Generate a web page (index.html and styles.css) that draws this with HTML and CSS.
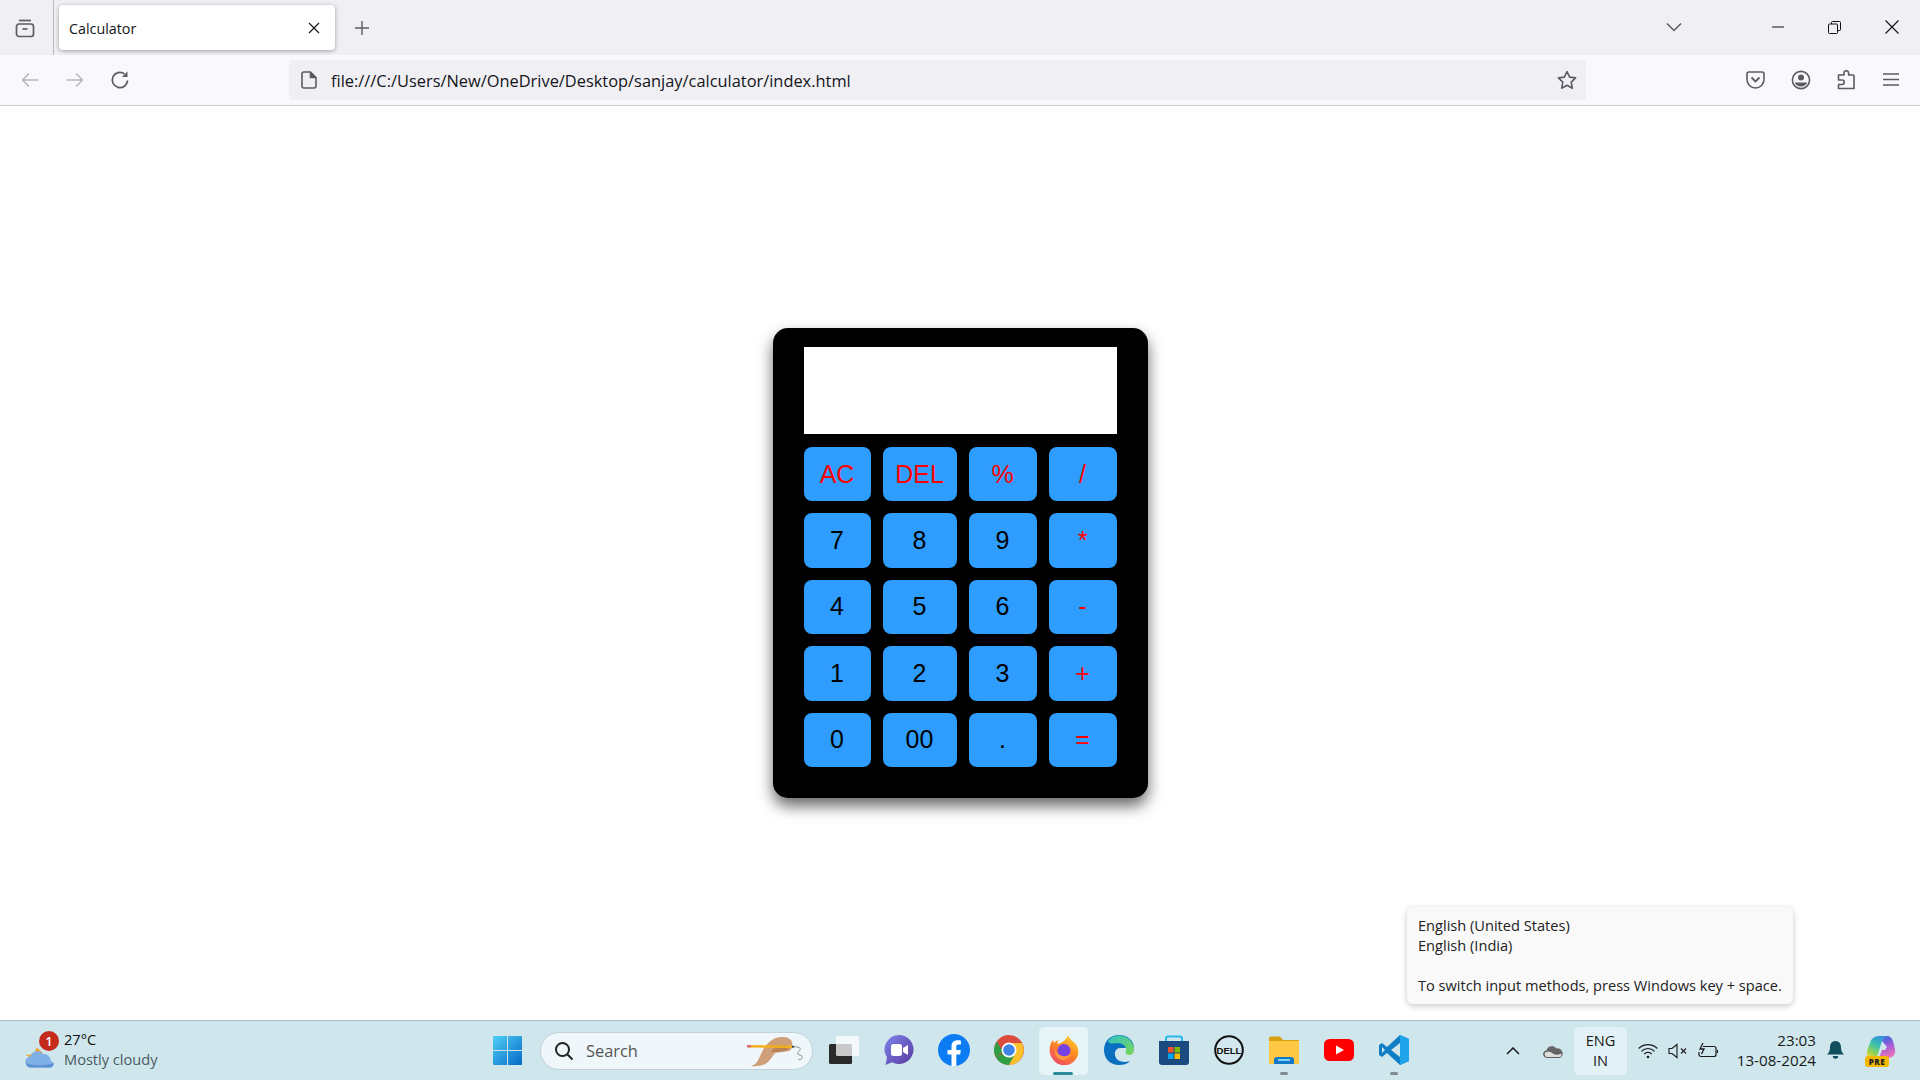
FILE: index.html
```html
<!DOCTYPE html>
<html lang="en">
<head>
<meta charset="utf-8">
<title>Calculator</title>
<link rel="stylesheet" href="styles.css">
</head>
<body>
<div class="tabstrip">
  <div class="tool-cell tabs-btn">
    <svg width="22" height="22" viewBox="0 0 22 22" fill="none" stroke="#5b5b66" stroke-width="1.7"><path d="M5 3.500h12"/><rect x="2.500" y="7" width="17" height="12.500" rx="2.500"/><path d="M8.500 12h5"/></svg>
  </div>
  <div class="tab-divider"></div>
  <div class="tab">
    <span class="tab-title">Calculator</span>
    <svg width="12" height="12" viewBox="0 0 12 12" fill="none" stroke="#15141a" stroke-width="1.2"><path d="M1 1l10 10M11 1L1 11"/></svg>
  </div>
  <div class="new-tab">
    <svg width="16" height="16" viewBox="0 0 16 16" fill="none" stroke="#5b5b66" stroke-width="1.4"><path d="M8 1v14M1 8h14"/></svg>
  </div>
  <div class="strip-right">
    <svg class="list-all" width="16" height="10" viewBox="0 0 16 10" fill="none" stroke="#5b5b66" stroke-width="1.5"><path d="M1 1.500l7 7 7-7"/></svg>
    <div class="win-btn"><svg width="12" height="2" viewBox="0 0 12 2"><path d="M0 1h12" stroke="#111" stroke-width="1"/></svg></div>
    <div class="win-btn"><svg width="13" height="13" viewBox="0 0 13 13" fill="none" stroke="#111" stroke-width="1"><rect x=".5" y="3" width="9" height="9.500" rx="1"/><path d="M3.500 3V1.500a1 1 0 0 1 1-1h7a1 1 0 0 1 1 1v7a1 1 0 0 1-1 1H9.500"/></svg></div>
    <div class="win-btn"><svg width="14" height="14" viewBox="0 0 14 14" fill="none" stroke="#111" stroke-width="1.1"><path d="M.5.5l13 13M13.500.5l-13 13"/></svg></div>
  </div>
</div>

<div class="toolbar">
  <div class="nav-btn"><svg width="18" height="16" viewBox="0 0 18 16" fill="none" stroke="#b6b6bb" stroke-width="1.5"><path d="M17.500 8H1.500M8 1.500L1.500 8 8 14.500"/></svg></div>
  <div class="nav-btn"><svg width="18" height="16" viewBox="0 0 18 16" fill="none" stroke="#b6b6bb" stroke-width="1.5"><path d="M.5 8h16M10 1.500L16.500 8 10 14.500"/></svg></div>
  <div class="nav-btn"><svg width="20" height="20" viewBox="0 0 20 20" fill="none" stroke="#5b5b66" stroke-width="1.7"><path d="M17.500 10.500A7.600 7.600 0 1 1 14.500 4"/><path d="M17.500 1.500v5.500h-5.500" fill="#5b5b66" stroke="none"/></svg></div>
  <div class="urlbar">
    <svg class="page-icon" width="16" height="18" viewBox="0 0 16 18" fill="none" stroke="#5b5b66" stroke-width="1.6"><path d="M3 1h6.500L15 6.500V15a2 2 0 0 1-2 2H3a2 2 0 0 1-2-2V3a2 2 0 0 1 2-2z"/><path d="M9.500 1v5.500H15" fill="#5b5b66"/></svg>
    <span class="url">file:///C:/Users/New/OneDrive/Desktop/sanjay/calculator/index.html</span>
    <svg class="star" width="20" height="20" viewBox="0 0 20 20" fill="none" stroke="#5b5b66" stroke-width="1.6" stroke-linejoin="round"><path d="M10 1.500l2.600 5.600 6 .8-4.400 4.200 1.100 6.100L10 15.200l-5.300 3 1.100-6.100L1.400 7.900l6-.8z"/></svg>
  </div>
  <div class="tools">
    <div class="nav-btn"><svg width="19" height="18" viewBox="0 0 19 18" fill="none" stroke="#5b5b66" stroke-width="1.6"><path d="M3 1h13a2 2 0 0 1 2 2v5.500a8.500 8.500 0 0 1-17 0V3a2 2 0 0 1 2-2z"/><path d="M5.500 6.500l4 4 4-4" stroke-width="1.8"/></svg></div>
    <div class="nav-btn"><svg width="20" height="20" viewBox="0 0 20 20"><circle cx="10" cy="10" r="8.600" fill="none" stroke="#5b5b66" stroke-width="1.6"/><circle cx="10" cy="7.500" r="3" fill="#5b5b66"/><path d="M3.800 12.500h12.400a6.800 6.800 0 0 1-12.400 0z" fill="#5b5b66"/></svg></div>
    <div class="nav-btn"><svg width="18" height="20" viewBox="0 0 18 20" fill="none" stroke="#5b5b66" stroke-width="1.6" stroke-linejoin="round"><path d="M7 5V3a2.300 2.300 0 0 1 4.600 0v2H16a1 1 0 0 1 1 1v12.500H1.500v-4H5a2.200 2.200 0 0 0 0-4.500H1.500V5z"/></svg></div>
    <div class="nav-btn"><svg width="16" height="13" viewBox="0 0 16 13" stroke="#5b5b66" stroke-width="1.5"><path d="M0 1h16M0 6.500h16M0 12h16"/></svg></div>
  </div>
</div>

<main class="page">
  <div class="calculator">
    <div class="display"></div>
    <div class="keys">
      <button class="key op">AC</button><button class="key op">DEL</button><button class="key op">%</button><button class="key op">/</button>
      <button class="key">7</button><button class="key">8</button><button class="key">9</button><button class="key op">*</button>
      <button class="key">4</button><button class="key">5</button><button class="key">6</button><button class="key op">-</button>
      <button class="key">1</button><button class="key">2</button><button class="key">3</button><button class="key op">+</button>
      <button class="key">0</button><button class="key">00</button><button class="key">.</button><button class="key op">=</button>
    </div>
  </div>
</main>

<div class="tooltip">
  <div>English (United States)</div>
  <div>English (India)</div>
  <div class="tip-hint">To switch input methods, press Windows key + space.</div>
</div>

<footer class="taskbar">
  <div class="weather">
    <div class="weather-icon">
      <svg width="30" height="26" viewBox="0 0 30 26"><path d="M0 11.500c6 1.500 10-1 11.500-7l6 5-7 8z" fill="#f0a028"/><path d="M6 24.500a5.500 5.500 0 0 1-.5-11 7 7 0 0 1 12.500-2.500 6.500 6.500 0 0 1 7.500 6.500 3.700 3.700 0 0 1 .5 7z" fill="#7fb0e6"/><path d="M1 20c6 3 20 3 28 0-.5 3-2 4.500-4 4.500H6C3 24.500 1.500 23 1 20z" fill="#5d8fd6"/></svg>
      <span class="badge">1</span>
    </div>
    <div class="weather-text"><div class="temp">27°C</div><div class="sky">Mostly cloudy</div></div>
  </div>

  <div class="cell">
    <svg width="29" height="29" viewBox="0 0 29 29"><defs><linearGradient id="w" x1="0" y1="0" x2="1" y2="1"><stop offset="0" stop-color="#4fd0f7"/><stop offset="1" stop-color="#0669c6"/></linearGradient></defs><path d="M1 0h13v14H0V1a1 1 0 0 1 1-1zM15 0h13a1 1 0 0 1 1 1v13H15zM0 15h14v14H1a1 1 0 0 1-1-1zM15 15h14v13a1 1 0 0 1-1 1H15z" fill="url(#w)"/></svg>
  </div>

  <div class="search">
    <svg width="20" height="20" viewBox="0 0 20 20" fill="none" stroke="#222" stroke-width="2"><circle cx="8.500" cy="8.500" r="6.500"/><path d="M13.500 13.500l5 5"/></svg>
    <span class="search-text">Search</span>
    <svg class="pencil" width="58" height="32" viewBox="0 0 58 32"><path d="M4 31c6-1 8-8 11-14 3-7 10-15 20-15 6 0 9 2 10 5s0 8-3 9l-8 1-6 1-6 8c-3 4-11 6-18 5z" fill="#cf9f7a"/><path d="M24 17l4-6 10-1 4 3-3 3-8 1z" fill="#b98358"/><path d="M2 10l43 .5v2.500L2 12.500z" fill="#f2b01e"/><path d="M0 10h4v2.500H0z" fill="#e06a6a"/><path d="M45 10.500l4 1.200-4 1.300z" fill="#444"/><path d="M49 12c3 0 5 1 4 3s-3 2-2 4 4 0 4 3-2 3-4 2" fill="none" stroke="#777" stroke-width=".8"/></svg>
  </div>

  <div class="cell first-app">
    <svg width="30" height="28" viewBox="0 0 30 28"><rect x="0" y="8" width="23" height="20" rx="1.500" fill="#2a2a2a"/><rect x="7" y="0" width="23" height="20" rx="1.500" fill="#fff" fill-opacity=".75"/></svg>
  </div>
  <div class="cell">
    <svg width="30" height="30" viewBox="0 0 30 30"><defs><linearGradient id="t" x1="0" y1="0" x2="1" y2="1"><stop offset="0" stop-color="#7b83eb"/><stop offset="1" stop-color="#5b3a9e"/></linearGradient></defs><path d="M15 0a14.500 14.500 0 1 1-7 27.200L1.500 30l1.500-7.500A14.500 14.500 0 0 1 15 0z" fill="url(#t)"/><rect x="7" y="9" width="11" height="12" rx="2.500" fill="#fff"/><path d="M19 13l5-3v10l-5-3z" fill="#fff"/></svg>
  </div>
  <div class="cell">
    <svg width="32" height="32" viewBox="0 0 32 32"><circle cx="16" cy="16" r="16" fill="#0b7cf3"/><path d="M13.500 32V20.500H9.500V16h4v-3.500c0-4 2.400-6.200 6-6.200 1.700 0 3 .2 3.400.2v4h-2.300c-1.900 0-2.300.9-2.300 2.200V16h4.500l-.6 4.500h-3.900V32z" fill="#fff"/></svg>
  </div>
  <div class="cell">
    <svg width="30" height="30" viewBox="0 0 30 30"><circle cx="15" cy="15" r="15" fill="#dd4b3e"/><path d="M15 15L2 22.500A15 15 0 0 0 15 30l7.500-13z" fill="#2f9e44"/><path d="M15 8h13a15 15 0 0 1-13 22l7-13z" fill="#fbc02d"/><path d="M2 22.500A15 15 0 0 1 3 6.500L9 17z" fill="#2f9e44"/><circle cx="15" cy="15" r="7.500" fill="#fff"/><circle cx="15" cy="15" r="5.800" fill="#3f83e8"/></svg>
  </div>
  <div class="cell active">
    <svg width="30" height="30" viewBox="0 0 30 30"><defs><linearGradient id="f" x1=".8" y1="0" x2=".2" y2="1"><stop offset="0" stop-color="#ffd43b"/><stop offset=".45" stop-color="#ff8a1f"/><stop offset="1" stop-color="#f0456a"/></linearGradient></defs><path d="M19 0c1 4 5 6 8 9 3 5 3 11 0 15a14 14 0 0 1-24-1C0 18 0 13 2 8l2-3 1 3c2-2 4-3 5-3-2 2-2 3-1 4 3-1 8-3 10-9z" fill="url(#f)"/><circle cx="15" cy="15.500" r="6.500" fill="#7542e5"/><path d="M6 13c1 7 9 11 16 6-3 8-14 8-16-1z" fill="#ff9a3c"/></svg>
    <span class="active-mark"></span>
  </div>
  <div class="cell">
    <svg width="30" height="30" viewBox="0 0 30 30"><defs><linearGradient id="e" x1="0" y1="0" x2="1" y2="1"><stop offset="0" stop-color="#2fc4c8"/><stop offset="1" stop-color="#7bd652"/></linearGradient></defs><path d="M15 0C6 0 0 6.500 0 15s6 15 15 15c5 0 9-1.500 11-4-6 2-14 1-15-6-.7-4 2-7 5-7h14C30 6 24 0 15 0z" fill="#0b6fc0"/><path d="M4 6c4-6 14-8 21-2 3 3 5 6 5 10 0 4-2 6-5 6-3 0-4-2-3-4 1-4-3-8-8-8-4 0-8 2-10-2z" fill="url(#e)"/></svg>
  </div>
  <div class="cell">
    <svg width="30" height="30" viewBox="0 0 30 30"><path d="M7 7V3.500A2 2 0 0 1 9 1.500h12a2 2 0 0 1 2 2V7" fill="none" stroke="#2bb6ee" stroke-width="2"/><path d="M0 6h30v21a3 3 0 0 1-3 3H3a3 3 0 0 1-3-3z" fill="#1a4a80"/><rect x="9" y="12" width="5.500" height="5.500" fill="#f0502a"/><rect x="15.500" y="12" width="5.500" height="5.500" fill="#7fba00"/><rect x="9" y="18.500" width="5.500" height="5.500" fill="#00a4ef"/><rect x="15.500" y="18.500" width="5.500" height="5.500" fill="#ffb900"/></svg>
  </div>
  <div class="cell">
    <svg width="30" height="30" viewBox="0 0 30 30"><circle cx="15" cy="15" r="13.800" fill="#fff" fill-opacity=".1" stroke="#111" stroke-width="2"/><text class="dell" x="15" y="18.500" text-anchor="middle">DELL</text></svg>
  </div>
  <div class="cell">
    <svg width="30" height="28" viewBox="0 0 30 28"><path d="M0 2a1.500 1.500 0 0 1 1.500-1.500H11L14 4h16v6H0z" fill="#d9a00f"/><path d="M0 5h30v22a1 1 0 0 1-1 1H1a1 1 0 0 1-1-1z" fill="#fdc944"/><path d="M5 28v-4a3 3 0 0 1 3-3h14a3 3 0 0 1 3 3v4z" fill="#0f78c4"/><rect x="9" y="23" width="12" height="2" fill="#7fd0f5"/></svg>
    <span class="run-mark"></span>
  </div>
  <div class="cell">
    <svg width="30" height="22" viewBox="0 0 30 22"><rect width="30" height="22" rx="5.500" fill="#f00"/><path d="M12 6.500l8 4.500-8 4.500z" fill="#fff"/></svg>
  </div>
  <div class="cell">
    <svg width="30" height="30" viewBox="0 0 30 30"><path d="M21 0l9 4v22l-9 4L8 18l-5 4-3-2v-10l3-2 5 4z" fill="#0f7ec4"/><path d="M21 0l9 4v22l-9 4z" fill="#1fa4ec"/><path d="M21 8v14l-9-7z" fill="#cfe6ed"/><path d="M3 12l3 3-3 3z" fill="#cfe6ed"/></svg>
    <span class="run-mark"></span>
  </div>

  <div class="tray">
    <div class="tray-cell chevron"><svg width="14" height="8" viewBox="0 0 14 8" fill="none" stroke="#1a1a1a" stroke-width="1.500"><path d="M1 7l6-6 6 6"/></svg></div>
    <div class="tray-cell cloud"><svg width="20" height="14" viewBox="0 0 20 14"><path d="M4 13.500a3.500 3.500 0 0 1-.5-7A5.500 5.500 0 0 1 13.500 4.500a4.500 4.500 0 0 1 2.500 9z" fill="#666"/><path d="M1 9c4-3 6-2 9 0s6 1 9 0c.5 3-1 4.500-3 4.500H4C2 13.500 1 11.500 1 9z" fill="#ddd" stroke="#444" stroke-width=".8"/></svg></div>
    <div class="lang"><div>ENG</div><div>IN</div></div>
    <div class="tray-cell status"><svg width="20" height="16" viewBox="0 0 20 16" fill="none" stroke="#1a1a1a" stroke-width="1.200"><path d="M.7 5.500a13 13 0 0 1 18.600 0M3.500 8.300a9 9 0 0 1 13 0M6.300 11a5 5 0 0 1 7.400 0"/><circle cx="10" cy="14" r="1.300" fill="#1a1a1a" stroke="none"/></svg></div>
    <div class="tray-cell status"><svg width="20" height="16" viewBox="0 0 20 16" fill="none" stroke="#1a1a1a" stroke-width="1.100"><path d="M1 5.500h3L9 1.500v13L4 10.500H1z"/><path d="M13 5.500l5 5M18 5.500l-5 5"/></svg></div>
    <div class="tray-cell status"><svg width="20" height="16" viewBox="0 0 20 16" fill="none" stroke="#1a1a1a" stroke-width="1.200"><path d="M5 3.500h11a2 2 0 0 1 2 2v6a2 2 0 0 1-2 2H3a2 2 0 0 1-2-2V9"/><path d="M19.500 7v3"/><path d="M5 0L2 6h4l-2.500 5" stroke-width="1.300"/></svg></div>
    <div class="clock"><div>23:03</div><div>13-08-2024</div></div>
    <div class="tray-cell bell"><svg width="17" height="19" viewBox="0 0 17 19"><path d="M8.500 0C4.500 0 3 3 3 6.500c0 3-1 5-3 7h17c-2-2-3-4-3-7C14 3 12.500 0 8.500 0z" fill="#10505f"/><path d="M5.800 15h5.400a2.700 2.700 0 0 1-5.400 0z" fill="#10505f"/></svg></div>
    <div class="copilot">
      <svg width="30" height="24" viewBox="0 0 30 24"><defs><linearGradient id="c1" x1=".7" y1="0" x2=".2" y2="1"><stop offset="0" stop-color="#2f8fe0"/><stop offset=".45" stop-color="#3fc4a8"/><stop offset=".8" stop-color="#9fd44a"/><stop offset="1" stop-color="#f4d03f"/></linearGradient><linearGradient id="c2" x1=".4" y1="0" x2=".7" y2="1"><stop offset="0" stop-color="#2a6fdb"/><stop offset=".5" stop-color="#a85bd8"/><stop offset="1" stop-color="#f27ab0"/></linearGradient></defs><path d="M13 1h8c-3 0-4 2-5 5l-4 13c-1 3-3 4-6 4-4 0-6-3-5-7L4 8c1-4 4-7 9-7z" fill="url(#c1)"/><path d="M16 6c1-3 2-5 5-5 3 0 5 2 6 5l2 8c1 5-2 9-7 9H9c3 0 5-2 6-5l1-3h3l2-3z" fill="url(#c2)"/></svg>
      <span class="pre">PRE</span>
    </div>
  </div>
</footer>
</body>
</html>
```

FILE: styles.css
```css
* { box-sizing: border-box; }

html, body { height: 100%; margin: 0; }

body {
  display: flex;
  flex-direction: column;
  height: 1080px;
  overflow: hidden;
  background: #fff;
  font-family: "Open Sans", "Noto Sans", sans-serif;
  color: #1a1a1a;
  position: relative;
}

/* Browser chrome */
.tabstrip {
  display: flex;
  align-items: center;
  flex: 0 0 55px;
  background: #f0f0f4;
}

.tool-cell, .nav-btn, .new-tab, .win-btn {
  display: flex;
  align-items: center;
  justify-content: center;
}

.tabs-btn { width: 50px; height: 55px; }

.tab-divider {
  width: 1px;
  height: 55px;
  margin: 0 5px 0 3px;
  background: #b8b8bd;
}

.tab {
  display: flex;
  align-items: center;
  justify-content: space-between;
  width: 276px;
  height: 45px;
  padding: 0 15px 0 10px;
  background: #fff;
  border-radius: 4px;
  box-shadow: 0 1px 4px rgba(0, 0, 0, .35);
}

.tab-title {
  padding-top: 1px;
  font-size: 14.3px;
  color: #15141a;
}

.new-tab { width: 53px; height: 44px; }

.strip-right {
  display: flex;
  align-items: center;
  margin-left: auto;
  height: 55px;
}

.list-all { margin-right: 67px; margin-top: -1px; }

.win-btn { width: 57px; height: 55px; margin-top: -1px; }

.toolbar {
  display: flex;
  align-items: center;
  flex: 0 0 51px;
  padding: 0 7px 1px 7px;
  background: #f9f9fb;
  border-bottom: 1px solid #cfcfd8;
}

.nav-btn { width: 45px; height: 40px; flex: none; }

.urlbar {
  display: flex;
  align-items: center;
  flex: none;
  width: 1297px;
  height: 40px;
  margin-left: 147px;
  padding: 0 9px 0 12px;
  background: #f0f0f4;
  border-radius: 4px;
}

.page-icon { flex: none; }

.url {
  margin-left: 14px;
  padding-top: 2px;
  font-size: 16.4px;
  color: #15141a;
  white-space: nowrap;
}

.star { margin-left: auto; }

.tools {
  display: flex;
  margin-left: auto;
}

/* Calculator page */
.page {
  display: flex;
  flex: 1;
  align-items: center;
  justify-content: center;
  min-height: 0;
}

.calculator {
  width: 375px;
  height: 470px;
  padding: 19px 31px 0;
  background: #000;
  border-radius: 15px;
  box-shadow: 0 8px 15px rgba(0, 0, 0, .6);
}

.display { height: 87px; background: #fff; }

.keys {
  display: grid;
  grid-template-columns: 67px 74px 68px 68px;
  grid-auto-rows: 54.4px;
  gap: 12px;
  margin-top: 13px;
}

.key {
  padding: 0;
  border: 0;
  border-radius: 8px;
  background: #2e9dff;
  font-family: "Liberation Sans", Arial, sans-serif;
  font-size: 25px;
  color: #000;
}

.key.op { color: #f00; }

/* Tooltip */
.tooltip {
  position: absolute;
  left: 1407px;
  top: 907px;
  width: 386px;
  height: 97px;
  padding: 8px 11px;
  background: #f9f9f9;
  border-radius: 6px;
  box-shadow: 0 2px 6px rgba(0, 0, 0, .22);
  font-size: 14.6px;
  line-height: 20px;
  color: #222;
}

.tip-hint { margin-top: 20px; }

/* Taskbar */
.taskbar {
  display: flex;
  align-items: center;
  flex: 0 0 60px;
  background: #cfe6ed;
  border-top: 1px solid #a9bcc6;
  font-size: 14.6px;
}

.weather {
  display: flex;
  align-items: center;
  width: 480px;
  padding-left: 25px;
}

.weather-icon {
  position: relative;
  width: 39px;
  height: 40px;
  padding-top: 12px;
}

.badge {
  position: absolute;
  left: 14px;
  top: 0;
  width: 20px;
  height: 20px;
  border-radius: 50%;
  background: #c42b1c;
  color: #fff;
  font-size: 13px;
  font-weight: 600;
  line-height: 20px;
  text-align: center;
}

.weather-text { margin-top: -4px; line-height: 20px; }
.temp { color: #111; }
.sky { color: #4a5a60; }

.cell {
  position: relative;
  display: flex;
  align-items: center;
  justify-content: center;
  flex: none;
  width: 55px;
  height: 48px;
}

.cell > svg { margin-top: -1px; }

.first-app { margin-left: 3px; }

.active::before {
  content: "";
  position: absolute;
  z-index: 0;
  left: 3px;
  right: 3px;
  top: 0;
  bottom: 0;
  border-radius: 5px;
  background: #e6f3f7;
}

.active svg { position: relative; }

.active-mark {
  position: absolute;
  bottom: 0;
  left: 17px;
  width: 20px;
  height: 3px;
  border-radius: 2px;
  background: #2a8a9a;
}

.run-mark {
  position: absolute;
  bottom: 0;
  left: 24px;
  width: 8px;
  height: 3px;
  border-radius: 2px;
  background: #7d8d93;
}

.search {
  display: flex;
  align-items: center;
  flex: none;
  width: 273px;
  height: 38px;
  margin-left: 5px;
  padding: 0 7px 0 13px;
  background: #eff7fa;
  border: 1px solid #c0d3da;
  border-radius: 19px;
}

.search-text {
  margin-left: 12px;
  font-size: 16.4px;
  color: #555;
}

.pencil { margin-left: auto; }

.tray {
  display: flex;
  align-items: center;
  margin-left: auto;
  padding-right: 20px;
  text-align: center;
}

.tray-cell {
  display: flex;
  align-items: center;
  justify-content: center;
  flex: none;
}

.chevron { width: 36px; }
.cloud { width: 43px; }
.status { width: 30px; }

.lang {
  width: 53px;
  height: 48px;
  margin-right: 6px;
  padding-top: 3px;
  background: #e2f1f6;
  border-radius: 5px;
  line-height: 20px;
}

.clock {
  width: 93px;
  margin-top: -2px;
  font-size: 15.2px;
  text-align: right;
  line-height: 20px;
}

.bell { width: 38px; }

.copilot {
  position: relative;
  width: 40px;
  height: 32px;
  margin-left: 6px;
  padding-left: 2px;
}

.pre {
  position: absolute;
  left: 5px;
  bottom: 0;
  width: 24px;
  height: 11px;
  border-radius: 3px;
  background: #f5b800;
  color: #222;
  font-size: 8px;
  font-weight: 800;
  line-height: 11px;
  letter-spacing: .5px;
}

.dell {
  font-family: "Liberation Sans", sans-serif;
  font-size: 9.5px;
  font-weight: 700;
  fill: #111;
}
```
